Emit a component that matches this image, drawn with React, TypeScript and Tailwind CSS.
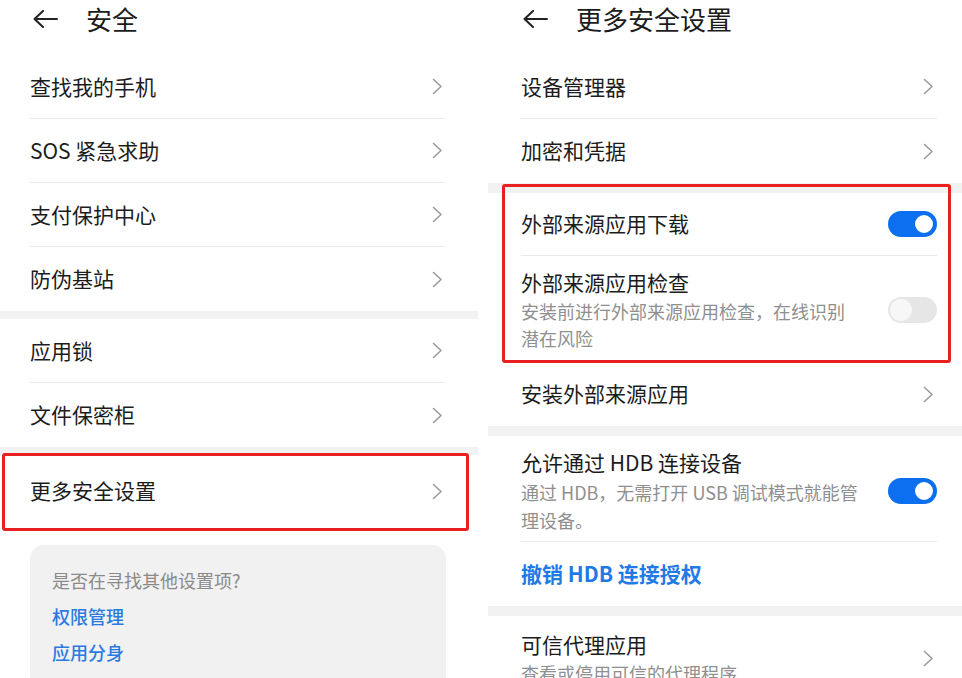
import { FC, ReactNode } from "react";

const font = { fontFamily: '"Noto Sans CJK SC", "Noto Sans", sans-serif' };

const BackArrow: FC = () => (
  <svg width="25" height="18" viewBox="0 0 25 18" fill="none">
    <path d="M1.5 9 H24 M10 1 L1.5 9 L10 17" stroke="#222" strokeWidth="2" strokeLinecap="round" strokeLinejoin="round" />
  </svg>
);

const Chevron: FC = () => (
  <div className="pr-[3px]">
    <svg width="11" height="17" viewBox="0 0 11 17" fill="none">
      <path d="M1.5 1.5 L9 8.5 L1.5 15.5" stroke="#9b9b9b" strokeWidth="1.6" strokeLinecap="round" strokeLinejoin="round" />
    </svg>
  </div>
);

const Toggle: FC<{ on?: boolean }> = ({ on }) =>
  on ? (
    <div className="flex h-[26px] w-[49px] shrink-0 items-center justify-end rounded-full bg-[#0b6fef] pr-[2px]">
      <div className="h-[22px] w-[22px] rounded-full border-2 border-[#0b6fef] bg-white" />
    </div>
  ) : (
    <div className="flex h-[26px] w-[49px] shrink-0 items-center rounded-full bg-[#e6e6e6] pl-[2px]">
      <div className="h-[22px] w-[22px] rounded-full bg-[#f7f7f7]" />
    </div>
  );

const Header: FC<{ title: string; pl: string }> = ({ title, pl }) => (
  <div className={`mb-[18px] flex h-[37px] items-center gap-[28px] ${pl}`}>
    <BackArrow />
    <span className="text-[26px] leading-[37px] text-[#1c1c1c]">{title}</span>
  </div>
);

const Row: FC<{ label: string; divider?: boolean; h?: string; right?: ReactNode }> = ({
  label,
  divider,
  h = "h-[64px]",
  right = <Chevron />,
}) => (
  <div className={`flex ${h} items-center justify-between ${divider ? "border-b border-[#e9e9e9]" : ""}`}>
    <span className="text-[21px] text-[#1c1c1c]">{label}</span>
    {right}
  </div>
);

const Band: FC<{ h?: string }> = ({ h = "h-[10px]" }) => <div className={`${h} bg-[#f2f2f2]`} />;

const DetailRow: FC<{ title: string; sub: string[]; right: ReactNode; pt: string; pb: string; lead: string; divider?: boolean }> = ({
  title,
  sub,
  right,
  pt,
  pb,
  lead,
  divider,
}) => (
  <div className={`flex items-center justify-between ${pt} ${pb} ${divider ? "border-b border-[#e9e9e9]" : ""}`}>
    <div className="flex flex-col">
      <span className="text-[21px] leading-[28px] text-[#1c1c1c]">{title}</span>
      <div className={`mt-[2px] text-[18px] ${lead} text-[#8f8f8f]`}>
        {sub.map((s) => (
          <div key={s}>{s}</div>
        ))}
      </div>
    </div>
    {right}
  </div>
);

export default function App() {
  return (
    <div className="relative flex h-[678px] w-[962px] items-start gap-[10px] overflow-hidden bg-white" style={font}>
      {/* left screen */}
      <div className="w-[478px] shrink-0">
        <Header title="安全" pl="pl-[33px]" />
        <div className="pl-[30px] pr-[32px]">
          <Row label="查找我的手机" divider />
          <Row label="SOS 紧急求助" divider />
          <Row label="支付保护中心" divider />
          <Row label="防伪基站" />
        </div>
        <Band h="h-[8px]" />
        <div className="pl-[30px] pr-[32px]">
          <Row label="应用锁" divider />
          <Row label="文件保密柜" />
        </div>
        <Band h="h-[8px]" />
        <div className="pl-[30px] pr-[32px]">
          <Row label="更多安全设置" h="h-[72px]" />
          <div className="mt-[18px] rounded-[14px] bg-[#f1f1f1] px-[22px] pb-[20px] pt-[17px] text-[18px] leading-[36px]">
            <div className="text-[#8a8a8a]">是否在寻找其他设置项?</div>
            <div className="font-medium text-[#2a7be0]">权限管理</div>
            <div className="font-medium text-[#2a7be0]">应用分身</div>
          </div>
        </div>
      </div>

      {/* right screen */}
      <div className="flex-1">
        <Header title="更多安全设置" pl="pl-[35px]" />
        <div className="pl-[33px] pr-[25px]">
          <Row label="设备管理器" divider />
          <Row label="加密和凭据" />
        </div>
        <Band />
        <div className="pl-[33px] pr-[25px]">
          <Row label="外部来源应用下载" h="h-[63px]" divider right={<Toggle on />} />
          <DetailRow
            title="外部来源应用检查"
            sub={["安装前进行外部来源应用检查，在线识别", "潜在风险"]}
            right={<Toggle />}
            pt="pt-[12px]"
            pb="pb-[10px]"
            lead="leading-[27px]"
          />
          <Row label="安装外部来源应用" />
        </div>
        <Band />
        <div className="pl-[33px] pr-[25px]">
          <DetailRow
            title="允许通过 HDB 连接设备"
            sub={["通过 HDB，无需打开 USB 调试模式就能管", "理设备。"]}
            right={<Toggle on />}
            pt="pt-[12px]"
            pb="pb-[7px]"
            lead="leading-[28px]"
            divider
          />
          <div className="flex h-[64px] items-center">
            <span className="text-[21px] font-semibold text-[#1f7ae6]">撤销 HDB 连接授权</span>
          </div>
        </div>
        <Band />
        <div className="pl-[33px] pr-[25px]">
          <DetailRow
            title="可信代理应用"
            sub={["查看或停用可信的代理程序"]}
            right={<Chevron />}
            pt="pt-[14px]"
            pb="pb-[10px]"
            lead="leading-[27px]"
          />
        </div>
      </div>

      {/* annotation boxes */}
      <div className="absolute left-[2px] top-[453px] h-[78px] w-[467px] rounded-[3px] border-[3px] border-[#e82020]" />
      <div className="absolute left-[502px] top-[184px] h-[179px] w-[449px] rounded-[3px] border-[3px] border-[#e82020]" />
    </div>
  );
}
